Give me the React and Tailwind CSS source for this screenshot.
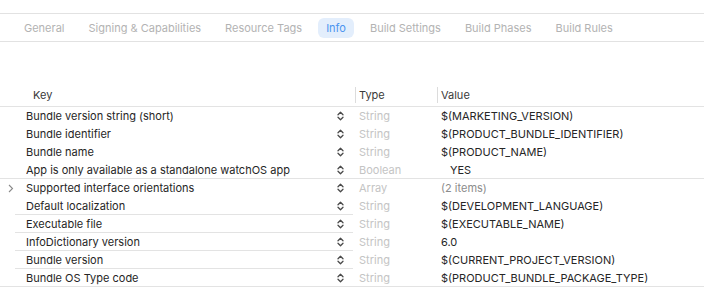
import React from "react";

const tabs = [
  "General",
  "Signing & Capabilities",
  "Resource Tags",
  "Info",
  "Build Settings",
  "Build Phases",
  "Build Rules",
];

const rows = [
  { key: "Bundle version string (short)", type: "String", value: "$(MARKETING_VERSION)" },
  { key: "Bundle identifier", type: "String", value: "$(PRODUCT_BUNDLE_IDENTIFIER)" },
  { key: "Bundle name", type: "String", value: "$(PRODUCT_NAME)" },
  { key: "App is only available as a standalone watchOS app", type: "Boolean", value: "YES", line: "full", indent: true },
  { key: "Supported interface orientations", type: "Array", value: "(2 items)", muted: true, expand: true },
  { key: "Default localization", type: "String", value: "$(DEVELOPMENT_LANGUAGE)", line: "key" },
  { key: "Executable file", type: "String", value: "$(EXECUTABLE_NAME)", line: "key" },
  { key: "InfoDictionary version", type: "String", value: "6.0", line: "key" },
  { key: "Bundle version", type: "String", value: "$(CURRENT_PROJECT_VERSION)", line: "key" },
  { key: "Bundle OS Type code", type: "String", value: "$(PRODUCT_BUNDLE_PACKAGE_TYPE)", line: "full" },
];

function Stepper() {
  return (
    <svg width="7" height="10" viewBox="0 0 7 10" className="shrink-0">
      <path d="M1 3.8 L3.5 1.3 L6 3.8" fill="none" stroke="#4a4a4a" strokeWidth="1.3" strokeLinecap="round" strokeLinejoin="round" />
      <path d="M1 6.2 L3.5 8.7 L6 6.2" fill="none" stroke="#4a4a4a" strokeWidth="1.3" strokeLinecap="round" strokeLinejoin="round" />
    </svg>
  );
}

function Row({ row }) {
  return (
    <div className="relative flex h-[18px] items-center">
      {/* Key */}
      <div className="flex w-[355px] shrink-0 items-center">
        <div className="flex w-[26px] shrink-0 justify-center pr-[5px]">
          {row.expand && (
            <svg width="6" height="9" viewBox="0 0 6 9">
              <path d="M1 1 L4.5 4.5 L1 8" fill="none" stroke="#8a8a8a" strokeWidth="1.1" />
            </svg>
          )}
        </div>
        <span className="flex-1 truncate text-[#262626]">{row.key}</span>
        <div className="ml-2 mr-[11px]">
          <Stepper />
        </div>
      </div>
      {/* Type */}
      <div className="w-[82px] shrink-0 pl-[4px] text-[#c4c4c4]">{row.type}</div>
      {/* Value */}
      <div className={`${row.indent ? "pl-[13px]" : "pl-[4px]"} ${row.muted ? "text-[#8c8c8c]" : "text-[#262626]"}`}>
        {row.value}
      </div>
      {row.line === "full" && <div className="absolute bottom-0 left-0 right-0 h-px bg-[#e3e3e3]" />}
      {row.line === "key" && <div className="absolute bottom-0 left-[15px] w-[338px] h-px bg-[#e3e3e3]" />}
    </div>
  );
}

export default function App() {
  return (
    <div className="h-[307px] w-[704px] overflow-hidden bg-white font-['Inter',sans-serif] text-[11px]">
      {/* Tabs */}
      <div className="mt-[13px] flex h-[29px] items-center border-y border-[#e2e2e2] pl-[16px] pt-px text-[11px] text-[#b3b3b3]">
        {tabs.map((t) => (
          <div
            key={t}
            className={`mr-[8px] flex h-[20px] items-center rounded-[6px] px-[8px] ${
              t === "Info" ? "bg-[#e3eefc] text-[#4b94f0]" : ""
            }`}
          >
            {t}
          </div>
        ))}
      </div>

      {/* Header */}
      <div className="mt-[42px] flex h-[23px] items-center border-b border-[#e3e3e3] text-[#3a3a3a]">
        <div className="w-[355px] shrink-0 pl-[33px]">Key</div>
        <div className="flex h-[16px] w-[82px] shrink-0 items-center border-l border-[#dcdcdc] pl-[3px]">Type</div>
        <div className="flex h-[16px] items-center border-l border-[#dcdcdc] pl-[3px]">Value</div>
      </div>

      {rows.map((r) => (
        <Row key={r.key} row={r} />
      ))}
    </div>
  );
}
